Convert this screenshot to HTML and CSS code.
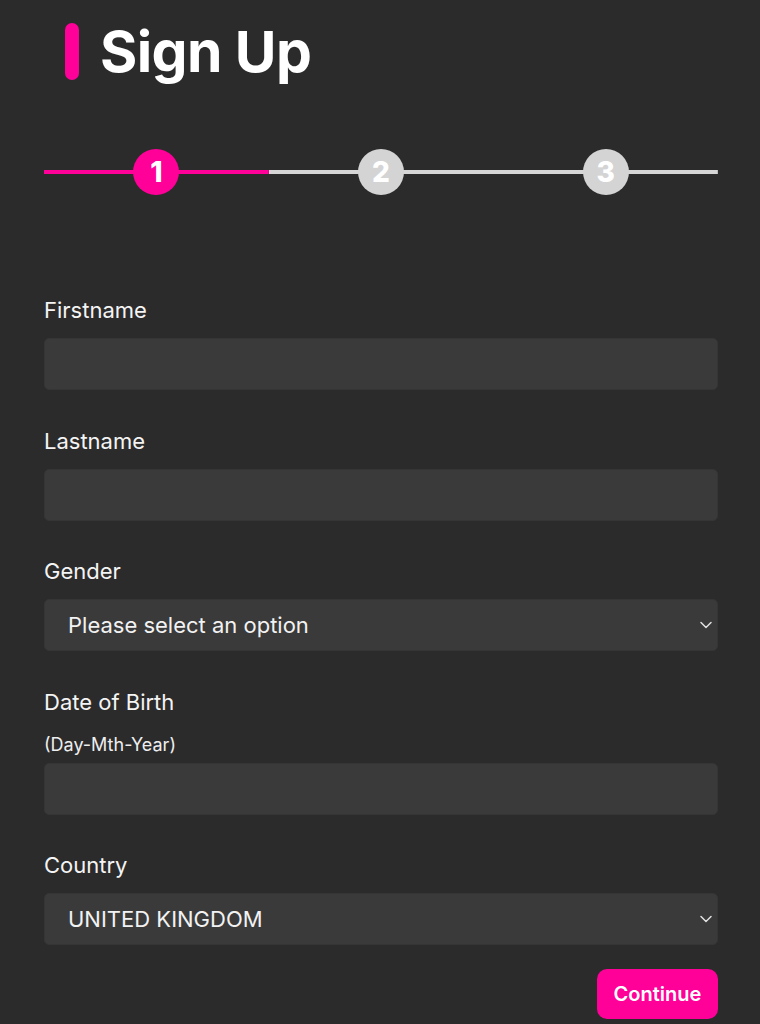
FILE: index.html
```html
<!DOCTYPE html>
<html lang="en">
<head>
<meta charset="utf-8">
<title>Sign Up</title>
<link rel="stylesheet" href="styles.css">
</head>
<body>
<main class="page">
  <header class="header">
    <span class="accent-bar"></span>
    <h1 class="title">Sign Up</h1>
  </header>

  <ol class="stepper">
    <li class="step step-active"><span class="step-dot">1</span></li>
    <li class="step"><span class="step-dot">2</span></li>
    <li class="step"><span class="step-dot">3</span></li>
  </ol>

  <form class="form">
    <div class="field">
      <label class="label" for="firstname">Firstname</label>
      <input class="control" id="firstname" type="text">
    </div>
    <div class="field">
      <label class="label" for="lastname">Lastname</label>
      <input class="control" id="lastname" type="text">
    </div>
    <div class="field">
      <label class="label" for="gender">Gender</label>
      <div class="select-wrap">
        <select class="control select" id="gender">
          <option>Please select an option</option>
        </select>
        <svg class="chevron" width="12" height="8" viewBox="0 0 12 8"><path d="M1 1.5 L6 6.5 L11 1.5" fill="none" stroke="#e0e0e0" stroke-width="1.5" stroke-linecap="round" stroke-linejoin="round"/></svg>
      </div>
    </div>
    <div class="field">
      <label class="label label-dob" for="dob">Date of Birth</label>
      <div class="hint">(Day-Mth-Year)</div>
      <input class="control control-dob" id="dob" type="text">
    </div>
    <div class="field field-last">
      <label class="label" for="country">Country</label>
      <div class="select-wrap">
        <select class="control select" id="country">
          <option>UNITED KINGDOM</option>
        </select>
        <svg class="chevron" width="12" height="8" viewBox="0 0 12 8"><path d="M1 1.5 L6 6.5 L11 1.5" fill="none" stroke="#e0e0e0" stroke-width="1.5" stroke-linecap="round" stroke-linejoin="round"/></svg>
      </div>
    </div>
    <div class="actions">
      <button class="btn" type="button">Continue</button>
    </div>
  </form>
</main>
</body>
</html>
```

FILE: styles.css
```css
* { box-sizing: border-box; }

html, body {
  margin: 0;
  padding: 0;
  background: #2b2b2b;
  color: #f2f2f2;
  font-family: Inter, "Noto Sans", "Liberation Sans", sans-serif;
}

.page {
  padding: 23px 42px 0 44px;
  min-height: 1024px;
}

.header {
  display: flex;
  align-items: center;
  gap: 21px;
  padding-left: 21px;
  height: 57px;
}

.accent-bar {
  width: 14px;
  height: 57px;
  border-radius: 7px;
  background: #ff0099;
}

.title {
  margin: 0;
  font-size: 57px;
  font-weight: 700;
  line-height: 57px;
  color: #ffffff;
  letter-spacing: -0.6px;
}

.stepper {
  list-style: none;
  margin: 69px 0 0;
  padding: 0;
  display: grid;
  grid-template-columns: repeat(3, 1fr);
  height: 46px;
}

.step {
  display: flex;
  align-items: center;
  justify-content: center;
  background: linear-gradient(#d6d6d6, #d6d6d6) center / 100% 4px no-repeat;
}

.step-dot {
  width: 46px;
  height: 46px;
  border-radius: 50%;
  background: #d4d4d4;
  color: #ffffff;
  font-size: 28px;
  font-weight: 800;
  display: flex;
  align-items: center;
  justify-content: center;
  line-height: 1;
}

.step-active {
  background: linear-gradient(#ff0099, #ff0099) center / 100% 4px no-repeat;
}

.step-active .step-dot {
  background: #ff0099;
}

.form {
  margin-top: 103px;
  display: flex;
  flex-direction: column;
}

.field {
  display: flex;
  flex-direction: column;
  margin-bottom: 38.5px;
}

.field-last {
  margin-bottom: 24px;
}

.label {
  font-size: 22px;
  line-height: 24px;
  font-weight: 400;
  color: #f4f4f4;
  margin-bottom: 16px;
}

.label-dob {
  margin-bottom: 21px;
}

.hint {
  font-size: 18px;
  line-height: 20px;
  color: #eeeeee;
  margin-bottom: 8px;
}

.control {
  display: block;
  width: 100%;
  height: 52px;
  background: #3a3a3a;
  border: 1px solid #353535;
  border-radius: 5px;
  color: #f2f2f2;
  font-family: inherit;
  font-size: 22px;
  padding: 0 23px;
  outline: none;
}

.select-wrap {
  position: relative;
}

.select {
  appearance: none;
  -webkit-appearance: none;
  font-weight: 400;
}

.chevron {
  position: absolute;
  right: 6px;
  top: 22px;
}

.actions {
  display: flex;
  justify-content: flex-end;
}

.btn {
  width: 121px;
  height: 50px;
  border: none;
  border-radius: 10px;
  background: #ff0099;
  color: #ffffff;
  font-family: inherit;
  font-size: 20px;
  font-weight: 600;
  cursor: pointer;
}
```
